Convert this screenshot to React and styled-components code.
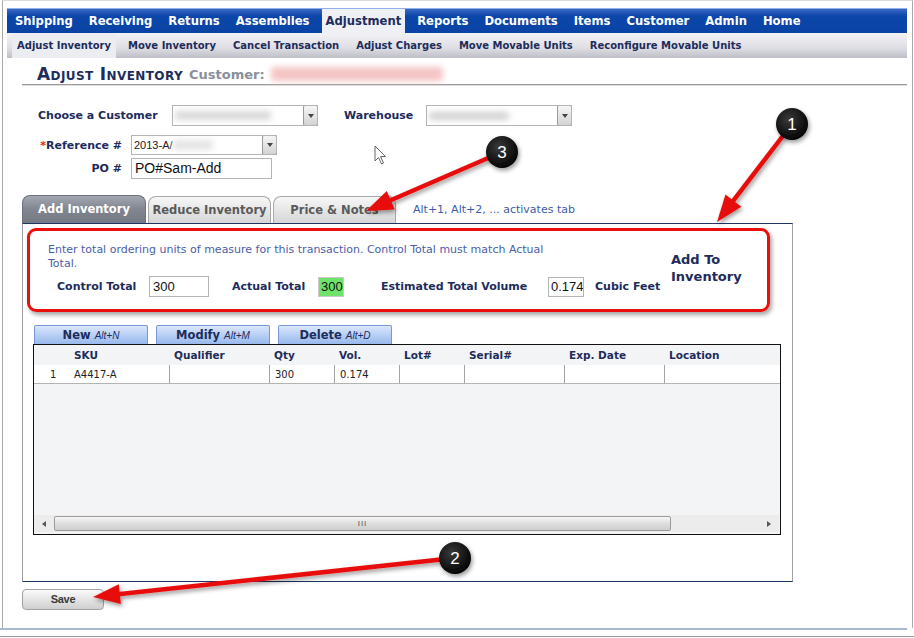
import React from "react";
import styled, { createGlobalStyle } from "styled-components";

const GlobalStyle = createGlobalStyle`
  body {
    margin: 0;
    background: #fff;
    font-family: "DejaVu Sans", Verdana, sans-serif;
  }
`;

const NAVY = "#1d2c5b";

const Page = styled.div`
  position: relative;
  width: 914px;
  height: 638px;
  overflow: hidden;
  display: flex;
  flex-direction: column;
`;

const Frame = styled.div`
  box-sizing: border-box;
  margin-left: 2px;
  width: 911px;
  height: 628px;
  border-left: 1px solid #a9a9a9;
  border-right: 1px solid #a9a9a9;
  border-top: 1px solid #dcdcdc;
  padding: 7px 0 0 4px;
  display: flex;
  flex-direction: column;
`;

const MenuBar = styled.div`
  display: flex;
  width: 900px;
  height: 25px;
  box-sizing: border-box;
  border-top: 1px solid #8fb0e8;
  background: linear-gradient(#3a68c4, #0b46a9 30%, #0a43a4);
`;

const MenuItem = styled.div`
  padding: 0 ${(p) => (p.$active ? "4px" : "8px")};
  margin: 0 ${(p) => (p.$active ? "4px" : "0")};
  line-height: 24px;
  font-size: 11.6px;
  font-weight: bold;
  color: ${(p) => (p.$active ? NAVY : "#fff")};
  background: ${(p) => (p.$active ? "#eef0f5" : "transparent")};
  white-space: nowrap;
`;

const SubBar = styled.div`
  display: flex;
  gap: 7px;
  width: 900px;
  height: 25px;
  padding-left: 5px;
  box-sizing: border-box;
  background: linear-gradient(#f3f3f6, #dedee4 60%, #bebfc7);
`;

const SubItem = styled.div`
  padding: 0 5px;
  line-height: 25px;
  font-size: 10px;
  font-weight: bold;
  color: ${NAVY};
  white-space: nowrap;
  background: ${(p) => (p.$active ? "#ecedf1" : "transparent")};
`;

const Content = styled.div`
  padding-left: 15px;
  width: 885px;
  display: flex;
  flex-direction: column;
`;

const TitleBar = styled.div`
  margin-top: 6px;
  height: 20px;
  padding-left: 15px;
  display: flex;
  align-items: flex-end;
  gap: 6px;
  border-bottom: 1px solid #9a9a9a;
  box-shadow: 0 1px 0 #dedede;
`;

const Title = styled.span`
  font-size: 17px;
  font-weight: bold;
  font-variant: small-caps;
  letter-spacing: 0.4px;
  color: ${NAVY};
  line-height: 20px;
`;

const Customer = styled.span`
  font-size: 13px;
  font-weight: bold;
  color: #8a8f9b;
  line-height: 19px;
`;

const Blur = styled.span`
  display: inline-block;
  width: ${(p) => p.$w}px;
  height: ${(p) => p.$h}px;
  background: ${(p) => p.$color};
  filter: blur(3px);
  border-radius: 3px;
  align-self: center;
`;

const Form = styled.div`
  margin-top: 20px;
  display: flex;
  flex-direction: column;
`;

const Row = styled.div`
  display: flex;
  align-items: center;
  gap: 9px;
  padding-left: ${(p) => p.$indent}px;
  margin-top: ${(p) => p.$top || 0}px;
`;

const Label = styled.label`
  flex: none;
  font-size: 11px;
  font-weight: bold;
  color: ${NAVY};
  white-space: nowrap;
  margin-left: ${(p) => p.$left || 0}px;
  width: ${(p) => (p.$w ? p.$w + "px" : "auto")};
  text-align: ${(p) => (p.$right ? "right" : "left")};
`;

const Req = styled.span`
  color: #e02020;
`;

const SelectBox = styled.div`
  display: flex;
  width: 146px;
  height: ${(p) => p.$h || 21}px;
  box-sizing: border-box;
  border: 1px solid #b4b4b4;
  background: #fff;
  overflow: hidden;
`;

const SelectValue = styled.div`
  flex: 1;
  display: flex;
  align-items: center;
  padding-left: 2px;
  font-family: "Liberation Sans", Arial, sans-serif;
  font-size: 11px;
  color: #222;
  overflow: hidden;
`;

const SelectBtn = styled.div`
  width: 15px;
  box-sizing: border-box;
  border: 1px solid #9a9a9a;
  border-radius: 2px;
  margin: -1px -1px -1px 0;
  background: linear-gradient(#f6f6f6, #d3d3d3);
  display: flex;
  align-items: center;
  justify-content: center;
  &::after {
    content: "";
    border-left: 3.5px solid transparent;
    border-right: 3.5px solid transparent;
    border-top: 4px solid #444;
  }
`;

const TextInput = styled.div`
  flex: none;
  box-sizing: border-box;
  width: ${(p) => p.$w}px;
  height: ${(p) => p.$h || 21}px;
  border: 1px solid ${(p) => (p.$green ? "#c9c9c9" : "#b4b4b4")};
  background: ${(p) => (p.$green ? "#6ee36a" : "#fff")};
  padding-left: ${(p) => p.$pad ?? 3}px;
  font-family: "Liberation Sans", Arial, sans-serif;
  font-size: ${(p) => p.$size || 14}px;
  line-height: ${(p) => (p.$h || 21) - 2}px;
  color: #111;
  margin-left: ${(p) => p.$left || 0}px;
  overflow: hidden;
  white-space: nowrap;
`;

const TabRow = styled.div`
  display: flex;
  align-items: flex-end;
  gap: 2px;
  margin-top: 16px;
  height: 28px;
`;

const Tab = styled.div`
  box-sizing: border-box;
  width: ${(p) => p.$w}px;
  height: ${(p) => (p.$active ? 28 : 27)}px;
  border: 1px solid ${(p) => (p.$active ? "#6d717c" : "#a9a9a9")};
  border-bottom: none;
  border-radius: 8px 8px 0 0;
  background: ${(p) =>
    p.$active
      ? "linear-gradient(#a3a7b0, #80858f 50%, #747985)"
      : "linear-gradient(#f7f7f7, #e3e3e3 60%, #d6d6d6)"};
  color: ${(p) => (p.$active ? "#fff" : "#5a5a5a")};
  font-size: 11.5px;
  font-weight: bold;
  text-align: center;
  line-height: 26px;
  white-space: nowrap;
`;

const TabHint = styled.div`
  margin-left: 15px;
  align-self: center;
  font-size: 11px;
  color: #3d5ca8;
`;

const Panel = styled.div`
  box-sizing: border-box;
  width: 771px;
  height: 359px;
  border: 1px solid #a0a0a0;
  border-top-color: #1f3565;
  border-bottom-color: #1f3565;
  padding: 4px 0 0 4px;
  display: flex;
  flex-direction: column;
`;

const InfoBox = styled.div`
  box-sizing: border-box;
  width: 743px;
  height: 84px;
  border: 3px solid #e80f0c;
  border-radius: 9px;
  box-shadow: 2px 3px 4px rgba(0, 0, 0, 0.35);
  display: flex;
  align-items: center;
  padding-left: 18px;
`;

const InfoMain = styled.div`
  width: 623px;
  display: flex;
  flex-direction: column;
`;

const InfoText = styled.p`
  margin: 0;
  width: 525px;
  font-size: 11px;
  line-height: 14px;
  color: #4a5ea8;
`;

const Fields = styled.div`
  display: flex;
  align-items: center;
  gap: 9px;
  margin-top: 5px;
  padding-left: 9px;
`;

const AddTo = styled.div`
  font-size: 13px;
  font-weight: bold;
  color: ${NAVY};
  line-height: 17px;
  margin-top: -4px;
`;

const ButtonRow = styled.div`
  display: flex;
  gap: 8px;
  margin-top: 13px;
  padding-left: 7px;
`;

const ActionButton = styled.div`
  box-sizing: border-box;
  width: 114px;
  height: 19px;
  border: 1px solid #7897d6;
  border-bottom: none;
  border-radius: 2px 2px 0 0;
  background: linear-gradient(#dbe7fb, #b8cff5 50%, #98b8ec);
  text-align: center;
  line-height: 18px;
  font-size: 11.5px;
  font-weight: bold;
  color: ${NAVY};
  white-space: nowrap;
  & em {
    font-family: "Liberation Sans", Arial, sans-serif;
    font-size: 10px;
    font-weight: normal;
  }
`;

const Grid = styled.div`
  box-sizing: border-box;
  margin-left: 6px;
  width: 748px;
  height: 191px;
  border: 1px solid #111;
  background: #f3f4f6;
  display: flex;
  flex-direction: column;
`;

const GridRow = styled.div`
  display: flex;
  height: ${(p) => (p.$header ? 20 : 18)}px;
  background: ${(p) => (p.$header ? "#f3f4f6" : "#fff")};
  border-bottom: ${(p) => (p.$header ? "none" : "1px solid #b3b3b3")};
`;

const Cell = styled.div`
  box-sizing: border-box;
  width: ${(p) => p.$w}px;
  padding-left: ${(p) => p.$pad ?? 5}px;
  border-left: ${(p) => (p.$sep ? "1px solid #a5a5a5" : "none")};
  font-size: ${(p) => (p.$header ? "10.5px" : "10px")};
  font-weight: ${(p) => (p.$header ? "bold" : "normal")};
  color: ${(p) => (p.$header ? NAVY : "#222")};
  line-height: ${(p) => (p.$header ? 21 : 19)}px;
  white-space: nowrap;
`;

const Filler = styled.div`
  flex: 1;
`;

const HScroll = styled.div`
  height: 17px;
  margin: 0 1px 2px 0;
  background: #ececec;
  display: flex;
  align-items: center;
`;

const ScrollArrow = styled.div`
  width: 20px;
  display: flex;
  justify-content: center;
  &::after {
    content: "";
    border-top: 3.5px solid transparent;
    border-bottom: 3.5px solid transparent;
    ${(p) => (p.$right ? "border-left" : "border-right")}: 4px solid #555;
  }
`;

const Thumb = styled.div`
  box-sizing: border-box;
  width: 617px;
  height: 15px;
  border: 1px solid #9c9c9c;
  border-radius: 2px;
  background: linear-gradient(#f7f7f7, #dcdcdc 55%, #cfcfcf);
  display: flex;
  align-items: center;
  justify-content: center;
  font-family: "Liberation Sans", Arial, sans-serif;
  font-size: 8px;
  letter-spacing: 1px;
  color: #555;
`;

const SaveButton = styled.div`
  box-sizing: border-box;
  margin-top: 7px;
  width: 82px;
  height: 21px;
  border: 1px solid #a3a3a3;
  border-radius: 4px;
  background: linear-gradient(#fafafa, #e5e5e5 50%, #cfcfcf);
  text-align: center;
  line-height: 19px;
  font-family: "Liberation Sans", Arial, sans-serif;
  font-size: 11px;
  font-weight: bold;
  letter-spacing: -0.3px;
  color: #3a3a3a;
`;

const BlueRule = styled.div`
  width: 907px;
  height: 2px;
  background: #a8b8d0;
`;

const GrayRule = styled.div`
  margin-top: 6px;
  width: 914px;
  height: 1px;
  background: #9a9a9a;
`;

const Overlay = styled.svg`
  position: absolute;
  left: 0;
  top: 0;
  pointer-events: none;
`;

const menu = ["Shipping", "Receiving", "Returns", "Assemblies", "Adjustment", "Reports", "Documents", "Items", "Customer", "Admin", "Home"];
const subMenu = ["Adjust Inventory", "Move Inventory", "Cancel Transaction", "Adjust Charges", "Move Movable Units", "Reconfigure Movable Units"];

const columns = [
  { key: "n", label: "", w: 35, pad: 16 },
  { key: "sku", label: "SKU", w: 100 },
  { key: "q", label: "Qualifier", w: 100 },
  { key: "qty", label: "Qty", w: 65 },
  { key: "vol", label: "Vol.", w: 65 },
  { key: "lot", label: "Lot#", w: 65 },
  { key: "ser", label: "Serial#", w: 100 },
  { key: "exp", label: "Exp. Date", w: 100 },
  { key: "loc", label: "Location", w: 100 },
];

const rows = [{ n: "1", sku: "A4417-A", q: "", qty: "300", vol: "0.174", lot: "", ser: "", exp: "", loc: "" }];

const Arrow = ({ x1, y1, x2, y2 }) => {
  const dx = x2 - x1;
  const dy = y2 - y1;
  const len = Math.hypot(dx, dy);
  const ux = dx / len;
  const uy = dy / len;
  const head = 27;
  const half = 10;
  const bx = x2 - ux * head;
  const by = y2 - uy * head;
  const pts = `${x2},${y2} ${bx - uy * half},${by + ux * half} ${bx + uy * half},${by - ux * half}`;
  return (
    <g filter="url(#shadow)">
      <line x1={x1} y1={y1} x2={bx + ux * 2} y2={by + uy * 2} stroke="#e8100c" strokeWidth="4.5" />
      <polygon points={pts} fill="#e8100c" />
    </g>
  );
};

const Badge = ({ cx, cy, n }) => (
  <g>
    <circle cx={cx} cy={cy} r="16" fill="url(#badge)" filter="url(#shadow)" />
    <text x={cx} y={cy + 6} textAnchor="middle" fill="#fff" fontSize="17" fontFamily="Liberation Sans, Arial, sans-serif">
      {n}
    </text>
  </g>
);

const Annotations = () => (
  <Overlay width="914" height="638" viewBox="0 0 914 638">
    <defs>
      <filter id="shadow" x="-20%" y="-20%" width="150%" height="150%">
        <feDropShadow dx="1.5" dy="2.5" stdDeviation="2" floodColor="#000" floodOpacity="0.4" />
      </filter>
      <radialGradient id="badge" cx="40%" cy="35%" r="70%">
        <stop offset="0" stopColor="#3a3a3a" />
        <stop offset="1" stopColor="#000" />
      </radialGradient>
    </defs>
    <Arrow x1={792} y1={124} x2={717} y2={222} />
    <Arrow x1={502} y1={152} x2={366} y2={211} />
    <Arrow x1={455} y1={558} x2={93} y2={597} />
    <Badge cx={792} cy={124} n="1" />
    <Badge cx={502} cy={152} n="3" />
    <Badge cx={455} cy={558} n="2" />
    <path
      d="M375 146 L375 161 L378.5 157.5 L381.5 164 L383.5 163 L380.5 156.5 L385.5 156.5 Z"
      fill="#fff"
      stroke="#666"
      strokeWidth="1"
      strokeLinejoin="round"
    />
  </Overlay>
);

const Select = ({ children, h }) => (
  <SelectBox $h={h}>
    <SelectValue>{children}</SelectValue>
    <SelectBtn />
  </SelectBox>
);

export default function App() {
  return (
    <>
      <GlobalStyle />
      <Page>
        <Frame>
          <MenuBar>
            {menu.map((m) => (
              <MenuItem key={m} $active={m === "Adjustment"}>
                {m}
              </MenuItem>
            ))}
          </MenuBar>
          <SubBar>
            {subMenu.map((m, i) => (
              <SubItem key={m} $active={i === 0}>
                {m}
              </SubItem>
            ))}
          </SubBar>
          <Content>
            <TitleBar>
              <Title>Adjust Inventory</Title>
              <Customer>Customer:</Customer>
              <Blur $w={172} $h={14} $color="#f4c4c4" />
            </TitleBar>

            <Form>
              <Row $indent={16}>
                <Label $w={125}>Choose a Customer</Label>
                <Select>
                  <Blur $w={96} $h={9} $color="#d8d8d8" />
                </Select>
                <Label $w={73} $left={17}>Warehouse</Label>
                <Select>
                  <Blur $w={80} $h={8} $color="#d0d0d0" />
                </Select>
              </Row>
              <Row $indent={14} $top={9}>
                <Label $w={86} $right>
                  <Req>*</Req>Reference #
                </Label>
                <Select h={20}>
                  2013-A/
                  <Blur $w={40} $h={10} $color="#e4e4e4" />
                </Select>
              </Row>
              <Row $indent={14} $top={3}>
                <Label $w={86} $right>PO #</Label>
                <TextInput $w={141}>PO#Sam-Add</TextInput>
              </Row>
            </Form>

            <TabRow>
              <Tab $active $w={124}>Add Inventory</Tab>
              <Tab $w={123}>Reduce Inventory</Tab>
              <Tab $w={123}>Price &amp; Notes</Tab>
              <TabHint>Alt+1, Alt+2, ... activates tab</TabHint>
            </TabRow>

            <Panel>
              <InfoBox>
                <InfoMain>
                  <InfoText>
                    Enter total ordering units of measure for this transaction. Control Total must match Actual Total.
                  </InfoText>
                  <Fields>
                    <Label $w={83}>Control Total</Label>
                    <TextInput $w={60} $h={21} $size={13}>300</TextInput>
                    <Label $w={77} $left={14}>Actual Total</Label>
                    <TextInput $w={26} $h={20} $size={13} $green $pad={2}>300</TextInput>
                    <Label $w={154} $left={28}>Estimated Total Volume</Label>
                    <TextInput $w={36} $h={20} $size={13} $left={4} $pad={2}>0.174</TextInput>
                    <Label $w={67} $left={2}>Cubic Feet</Label>
                  </Fields>
                </InfoMain>
                <AddTo>
                  Add To
                  <br />
                  Inventory
                </AddTo>
              </InfoBox>

              <ButtonRow>
                <ActionButton>
                  New <em>Alt+N</em>
                </ActionButton>
                <ActionButton>
                  Modify <em>Alt+M</em>
                </ActionButton>
                <ActionButton>
                  Delete <em>Alt+D</em>
                </ActionButton>
              </ButtonRow>

              <Grid>
                <GridRow $header>
                  {columns.map((c) => (
                    <Cell key={c.key} $w={c.w} $pad={c.pad} $header>
                      {c.label}
                    </Cell>
                  ))}
                </GridRow>
                {rows.map((r) => (
                  <GridRow key={r.n}>
                    {columns.map((c, i) => (
                      <Cell key={c.key} $w={c.w} $pad={c.pad} $sep={i > 1}>
                        {r[c.key]}
                      </Cell>
                    ))}
                  </GridRow>
                ))}
                <Filler />
                <HScroll>
                  <ScrollArrow />
                  <Thumb>III</Thumb>
                  <Filler />
                  <ScrollArrow $right />
                </HScroll>
              </Grid>
            </Panel>

            <SaveButton>Save</SaveButton>
          </Content>
        </Frame>
        <BlueRule />
        <GrayRule />
        <Annotations />
      </Page>
    </>
  );
}
